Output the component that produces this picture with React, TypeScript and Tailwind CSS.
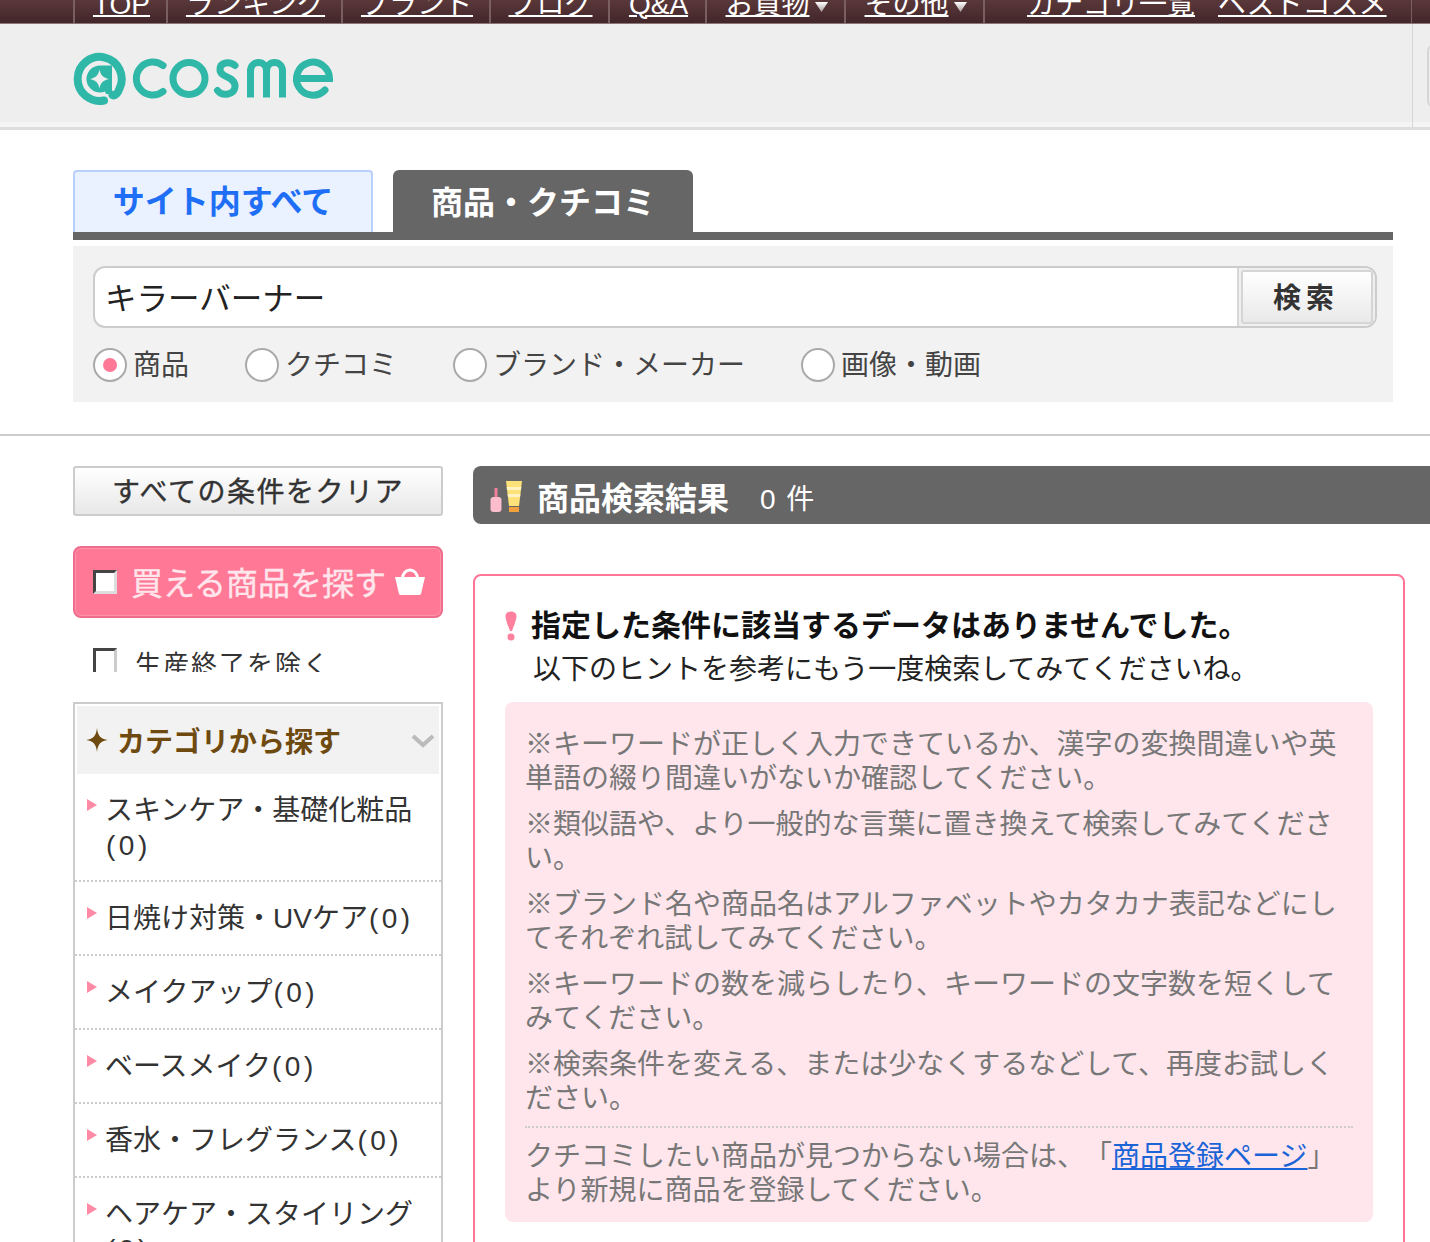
const FONT = "font-['Liberation_Sans','Noto_Sans_CJK_JP',sans-serif]";

const navItems: { label: string; w: string; arrow?: boolean }[] = [
  { label: "TOP", w: "w-[93px]" },
  { label: "ランキング", w: "w-[175px]" },
  { label: "ブランド", w: "w-[148px]" },
  { label: "ブログ", w: "w-[119px]" },
  { label: "Q&A", w: "w-[97px]" },
  { label: "お買物", w: "w-[139px]", arrow: true },
  { label: "その他", w: "w-[139px]", arrow: true },
];

const hints = [
  "※キーワードが正しく入力できているか、漢字の変換間違いや英単語の綴り間違いがないか確認してください。",
  "※類似語や、より一般的な言葉に置き換えて検索してみてください。",
  "※ブランド名や商品名はアルファベットやカタカナ表記などにしてそれぞれ試してみてください。",
  "※キーワードの数を減らしたり、キーワードの文字数を短くしてみてください。",
  "※検索条件を変える、または少なくするなどして、再度お試しください。",
];

const categories = [
  "スキンケア・基礎化粧品",
  "日焼け対策・UVケア",
  "メイクアップ",
  "ベースメイク",
  "香水・フレグランス",
  "ヘアケア・スタイリング",
];

const radios = ["商品", "クチコミ", "ブランド・メーカー", "画像・動画"];

const TEAL = "#2fb8a8";

function Logo() {
  return (
    <svg width="262" height="56" viewBox="0 0 262 56" fill="none" className="block">
      <path d="M31 48.5 A22 22 0 1 1 46.5 36.5 C45 41 42 44.5 39.5 43" stroke={TEAL} strokeWidth="8" strokeLinecap="round" />
      <path d="M26.5 13.5 L39 13.5 L39 42 L33 42 L32 39.5 A13.5 13.5 0 1 1 26.5 13.5 Z" fill={TEAL} />
      <path d="M26.5 17.5 C27.5 23 30.5 26 36 27 C30.5 28 27.5 31 26.5 36.5 C25.5 31 22.5 28 17 27 C22.5 26 25.5 23 26.5 17.5 Z" fill="#eeeeee" />
      <path d="M90 13.5 A16.5 16.5 0 1 0 90 39.5" stroke={TEAL} strokeWidth="7" strokeLinecap="round" />
      <circle cx="116" cy="26.5" r="16" stroke={TEAL} strokeWidth="7" />
      <path d="M162 13.5 C157 9 147 10 147 17.5 C147 26 162 24 162 34 C162 43.5 149 44.5 144.5 38.5" stroke={TEAL} strokeWidth="7" strokeLinecap="round" />
      <path d="M177.5 45.5 L177.5 19 C177.5 13.5 181.5 10.5 185.5 10.5 C190 10.5 193.5 14 193.5 19 L193.5 45.5 M193.5 19 C193.5 14 197 10.5 201.5 10.5 C206 10.5 209.5 14 209.5 19 L209.5 45.5" stroke={TEAL} strokeWidth="7" />
      <path d="M223.5 26.5 L256.5 26.5 A16.5 16.5 0 1 0 252 38" stroke={TEAL} strokeWidth="7" strokeLinecap="round" />
    </svg>
  );
}

function Marker() {
  return (
    <svg width="10" height="12" viewBox="0 0 10 12" className="mt-[6px] shrink-0">
      <path d="M0 0 L10 6 L0 12 Z" fill="#ff8aa5" />
    </svg>
  );
}

function NavArrow() {
  return (
    <svg width="13" height="10" viewBox="0 0 13 10" className="ml-[5px] mt-[2px] shrink-0 self-start">
      <defs>
        <linearGradient id="arrowFill" x1="0" y1="0" x2="0" y2="1">
          <stop offset="0" stopColor="#ffffff" />
          <stop offset="1" stopColor="#a89c9c" />
        </linearGradient>
      </defs>
      <path d="M0 0 L13 0 L6.5 10 Z" fill="url(#arrowFill)" />
    </svg>
  );
}

export default function App() {
  return (
    <div className={`${FONT} h-[1242px] w-[1430px] overflow-hidden bg-white text-[28px] text-[#333]`}>
      {/* top nav */}
      <nav className="flex h-6 items-stretch overflow-hidden border-b border-[#8b7576] bg-gradient-to-b from-[#5a383a] to-[#42262a] pl-[73px]">
        {navItems.map((n) => (
          <div key={n.label} className={`${n.w} flex shrink-0 items-end justify-center border-l-2 border-[#7a5f60] pb-[1px] pl-[2px]`}>
            <span className="whitespace-nowrap leading-[34px] text-white underline decoration-2 underline-offset-[1px]">{n.label}</span>
            {n.arrow && <NavArrow />}
          </div>
        ))}
        <div className="flex w-[428px] shrink-0 items-end gap-[23px] border-l-2 border-[#7a5f60] pb-[1px] pl-[42px]">
          <span className="whitespace-nowrap leading-[34px] text-white underline decoration-2 underline-offset-[1px]">カテゴリ一覧</span>
          <span className="whitespace-nowrap leading-[34px] text-white underline decoration-2 underline-offset-[1px]">ベストコスメ</span>
        </div>
        <div className="flex-1 border-l border-[#7a5f60]" />
      </nav>

      {/* logo bar */}
      <header className="flex h-[106px] justify-between border-b-[3px] border-[#dddddd] bg-gradient-to-b from-[#eeeeee] from-[95%] to-[#f4f4f4] to-[95%] pl-[73px]">
        <div className="mt-[28px]">
          <Logo />
        </div>
        <div className="w-[18px] border-l border-[#d5d5d5] pl-[14px] pt-[21px]">
          <div className="h-[62px] w-[10px] rounded-l-md border-2 border-[#d5d5d5]" />
        </div>
      </header>

      {/* search */}
      <section className="ml-[73px] mt-[40px] w-[1320px]">
        <div className="flex gap-5">
          <div className="flex h-[62px] w-[300px] items-center justify-center rounded-t-[4px] border-2 border-b-0 border-[#b8d0fb] bg-[#eaf1ff] text-[32px] font-bold text-[#1e6ff5]">
            サイト内すべて
          </div>
          <div className="flex h-[62px] w-[300px] items-center justify-center rounded-t-[6px] bg-[#666666] pt-[4px] text-[32px] font-bold text-white">
            商品・クチコミ
          </div>
        </div>
        <div className="h-2 bg-[#666666]" />
        <div className="mt-[6px] h-[156px] bg-[#f2f2f2] px-5 pt-5">
          <div className="flex h-[62px] w-[1284px] overflow-hidden rounded-xl border-2 border-[#cccccc] bg-white">
            <div className="flex-1 pl-[10px] pt-[2px] text-[31.5px] leading-[58px] text-[#222]">キラーバーナー</div>
            <div className="w-[138px] border-l-2 border-[#d8d8d8] bg-[#efefef] p-[2px]">
              <div className="flex h-full items-center justify-center rounded-[3px] border-2 border-[#d5d5d5] bg-gradient-to-b from-white to-[#e9e9e9] pr-[2px] pt-[4px] text-[28px] font-bold leading-none tracking-[5px] text-[#333]">
                検索
              </div>
            </div>
          </div>
          <div className="mt-5 flex gap-14">
            {radios.map((r, i) => (
              <div key={r} className="flex items-center gap-[6px]">
                <span className="flex h-[34px] w-[34px] items-center justify-center rounded-full border-2 border-[#aaaaaa] bg-white">
                  {i === 0 && <span className="h-[14px] w-[14px] rounded-full bg-[#ff7896]" />}
                </span>
                <span className="h-[34px] whitespace-nowrap pt-[1px] leading-[34px] text-[#444]">{r}</span>
              </div>
            ))}
          </div>
        </div>
      </section>

      <hr className="mt-[32px] border-t-2 border-[#cccccc]" />

      {/* body */}
      <div className="ml-[73px] mt-[30px] flex gap-[30px]">
        <aside className="w-[370px] shrink-0">
          <div className="flex h-[50px] items-center justify-center rounded-[3px] border-2 border-[#cccccc] bg-gradient-to-b from-white to-[#e8e8e8] pt-[3px] text-[28px] tracking-[1.5px] text-[#333] [-webkit-text-stroke:0.4px_#333]">
            すべての条件をクリア
          </div>

          <div className="mt-[30px] flex h-[72px] items-center rounded-lg border-2 border-[#ee6c8c] bg-[#ff7896] pl-[18px] shadow-[inset_0_0_0_1px_#ff93ab]">
            <span className="h-6 w-6 shrink-0 border-[3px] border-[#444] border-b-[#ddd] border-r-[#ddd] bg-white" />
            <span className="ml-[14px] whitespace-nowrap pt-[3px] text-[32px] leading-none text-[#ffe6ec] [-webkit-text-stroke:0.4px_#ffe6ec]">買える商品を探す</span>
            <svg width="32" height="30" viewBox="0 0 32 30" className="mb-[3px] ml-[8px] shrink-0">
              <path d="M8.5 13 C8.5 1 23.5 1 23.5 13" fill="none" stroke="#fff" strokeWidth="3" />
              <path d="M1 11 L31 11 L27 28 Q26.5 29 25 29 L7 29 Q5.500 29 5 28 Z" fill="#fff" />
            </svg>
          </div>

          <div className="mt-[30px] flex h-6 items-start overflow-hidden pl-5">
            <span className="h-[34px] w-6 shrink-0 border-[3px] border-[#444] border-b-[#ccc] border-r-[#ccc] bg-white" />
            <span className="ml-[18px] mt-[2px] whitespace-nowrap text-[26px] leading-[30px] tracking-[2px] text-[#333]">生産終了を除く</span>
          </div>

          <div className="mt-[30px] border-2 border-b-0 border-[#cccccc] px-[2px] pt-[2px]">
            <div className="flex h-[68px] items-center justify-between bg-[#f2f2f2] pl-[9px] pr-[4px]">
              <div className="flex items-center gap-[9px]">
                <svg width="22" height="24" viewBox="0 0 20 22" className="shrink-0">
                  <path d="M10 0 C10.8 7 13 10 20 11 C13 12 10.800 15 10 22 C9.200 15 7 12 0 11 C7 10 9.200 7 10 0 Z" fill="#6e4a10" />
                </svg>
                <span className="pt-[5px] font-bold text-[#6e4a10]">カテゴリから探す</span>
              </div>
              <svg width="24" height="14" viewBox="0 0 24 14" fill="none" className="mt-[2px]">
                <path d="M2 2 L12 11 L22 2" stroke="#bbbbbb" strokeWidth="4" />
              </svg>
            </div>
            <ul className="-mx-[2px]">
              {categories.map((c) => (
                <li key={c} className="flex gap-2 border-b-2 border-dotted border-[#cccccc] pb-[18px] pl-[12px] pr-[20px] pt-[19px] leading-[35px] first:pb-[17px]">
                  <Marker />
                  <span className="min-w-0 flex-1 text-[#333]">
                    {c}
                    <span className="ml-[1px] tracking-[3.5px]">(0)</span>
                  </span>
                </li>
              ))}
            </ul>
          </div>
        </aside>

        <main className="min-w-0 flex-1">
          <div className="flex h-[58px] w-[1000px] items-center rounded-lg bg-[#666666] pl-[17px]">
            <svg width="33" height="33" viewBox="0 0 33 33" className="mt-[2px] shrink-0">
              <rect x="4.500" y="8" width="3" height="10" fill="#ef7f9a" />
              <rect x="0.5" y="17" width="11" height="15" rx="3" fill="#fbbccb" />
              <path d="M16 1 L32 1 L29 26 L19 26 Z" fill="#fde27a" />
              <path d="M16.7 7 L31.3 7 L31 10 L17 10 Z M17.500 14 L30.500 14 L30 17 L18 17 Z" fill="#fff3c2" />
              <rect x="19" y="27" width="10" height="5" fill="#f0a03c" />
            </svg>
            <span className="ml-[14px] whitespace-nowrap pt-[8px] text-[32px] font-bold leading-none text-white">商品検索結果</span>
            <span className="ml-[31px] whitespace-nowrap pt-[10px] text-[28px] leading-none tracking-[1.5px] text-white">0 件</span>
          </div>

          <div className="mt-[50px] h-[800px] w-[932px] rounded-lg border-2 border-[#ff7596] pl-[29px] pt-[30px]">
            <div className="flex items-center">
              <svg width="14" height="30" viewBox="0 0 14 30" className="shrink-0">
                <path d="M1.500 5 C1.500 -1 12.500 -1 12.500 5 C12.500 9 9 17 8 20 L6 20 C5 17 1.500 9 1.500 5 Z" fill="#ff7f9e" />
                <circle cx="7" cy="26" r="3.500" fill="#ff7f9e" />
              </svg>
              <h1 className="ml-[13px] whitespace-nowrap text-[30px] font-bold leading-[40px] text-[#111]">指定した条件に該当するデータはありませんでした。</h1>
            </div>
            <p className="ml-[29px] mt-[3px] whitespace-nowrap leading-[42px] text-[#222]">以下のヒントを参考にもう一度検索してみてくださいね。</p>

            <div className="ml-[1px] mt-[11px] w-[868px] rounded-lg bg-[#fee6ec] px-5 pb-[14px] pt-[26px] leading-[34px] text-[#777]">
              <div className="mb-[-2px] flex flex-col gap-3">
                {hints.map((h) => (
                  <p key={h}>{h}</p>
                ))}
              </div>
              <div className="mt-3 border-t-2 border-dotted border-[#cccccc] pt-[12px]">
                クチコミしたい商品が見つからない場合は、<span className="ml-[13px]">「</span><span className="text-[#1a64d8] underline">商品登録ページ</span>」より新規に商品を登録してください。
              </div>
            </div>
          </div>
        </main>
      </div>
    </div>
  );
}
